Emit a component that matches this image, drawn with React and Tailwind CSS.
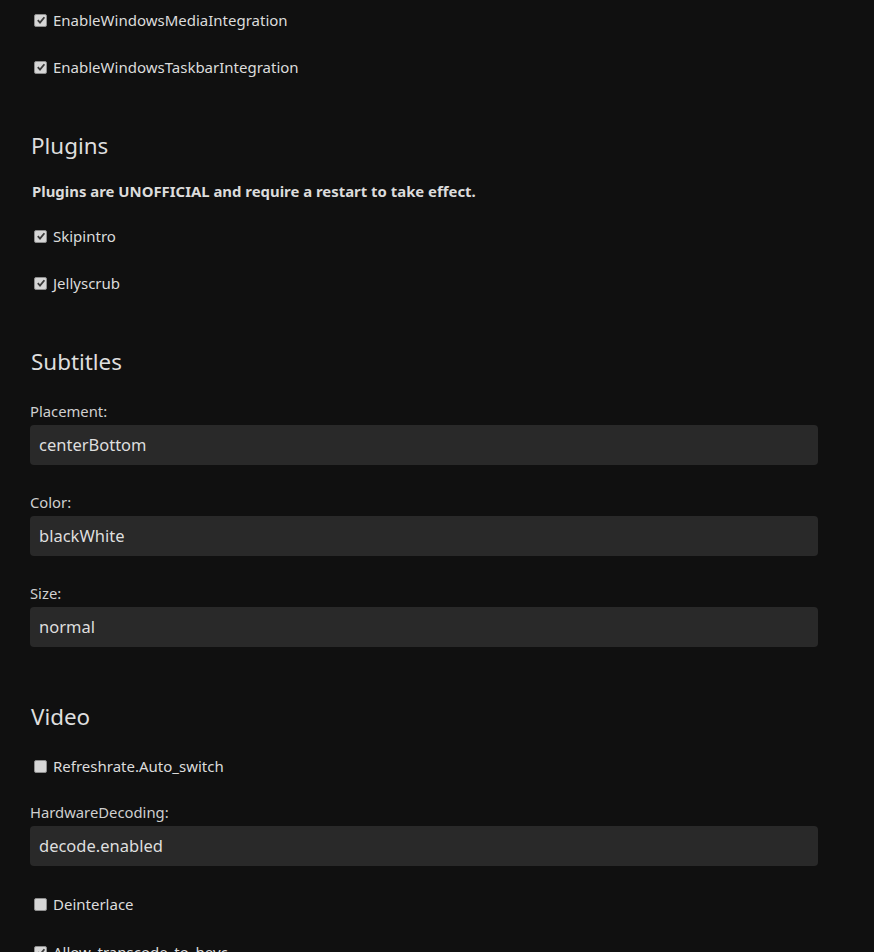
import React from "react";

const font = { fontFamily: '"Noto Sans", "Open Sans", sans-serif' };

function Check({ checked, label, className = "" }) {
  return (
    <div className={"flex items-center h-[24px] pl-[4px] " + className}>
      <span className="w-[13px] h-[13px] rounded-[2px] bg-[#d6d6d6] border border-[#8e8e8e] flex items-center justify-center shrink-0">
        {checked && (
          <svg width="10" height="10" viewBox="0 0 10 10">
            <path d="M1.8 5.2 L4 7.6 L8.4 2.2" fill="none" stroke="#3a3a3a" strokeWidth="1.8" />
          </svg>
        )}
      </span>
      <span className="ml-[6px] text-[15px] text-[#dcdcdc] leading-none">{label}</span>
    </div>
  );
}

function Heading({ children, className = "" }) {
  return (
    <div className={"h-[32px] flex items-center pl-[1px] text-[22.4px] text-[#dedede] " + className}>
      {children}
    </div>
  );
}

function SelectField({ label, value, className = "" }) {
  return (
    <div className={"flex flex-col " + className}>
      <div className="h-[20px] flex items-center text-[14.8px] text-[#cfcfcf]">{label}</div>
      <div className="mt-[4px] w-[788px] h-[40px] rounded-[4px] bg-[#292929] flex items-center px-[9px] text-[16.5px] text-[#dedede]">
        {value}
      </div>
    </div>
  );
}

export default function App() {
  return (
    <div style={font} className="w-[874px] h-[952px] overflow-hidden bg-[#101010] px-[30px] pt-[8px]">
      <Check checked label="EnableWindowsMediaIntegration" />
      <Check checked label="EnableWindowsTaskbarIntegration" className="mt-[23px]" />

      <Heading className="mt-[51px]">Plugins</Heading>
      <div className="mt-[18px] h-[22px] flex items-center pl-[2px] text-[14.9px] font-bold text-[#dcdcdc]">
        Plugins are UNOFFICIAL and require a restart to take effect.
      </div>
      <Check checked label="Skipintro" className="mt-[22px]" />
      <Check checked label="Jellyscrub" className="mt-[23px]" />

      <Heading className="mt-[51px]">Subtitles</Heading>
      <SelectField label="Placement:" value="centerBottom" className="mt-[23px]" />
      <SelectField label="Color:" value="blackWhite" className="mt-[27px]" />
      <SelectField label="Size:" value="normal" className="mt-[27px]" />

      <Heading className="mt-[54px]">Video</Heading>
      <Check label="Refreshrate.Auto_switch" className="mt-[21px]" />
      <SelectField label="HardwareDecoding:" value="decode.enabled" className="mt-[24px]" />
      <Check label="Deinterlace" className="mt-[26px]" />
      <Check checked label="Allow_transcode_to_hevc" className="mt-[24px]" />
    </div>
  );
}
